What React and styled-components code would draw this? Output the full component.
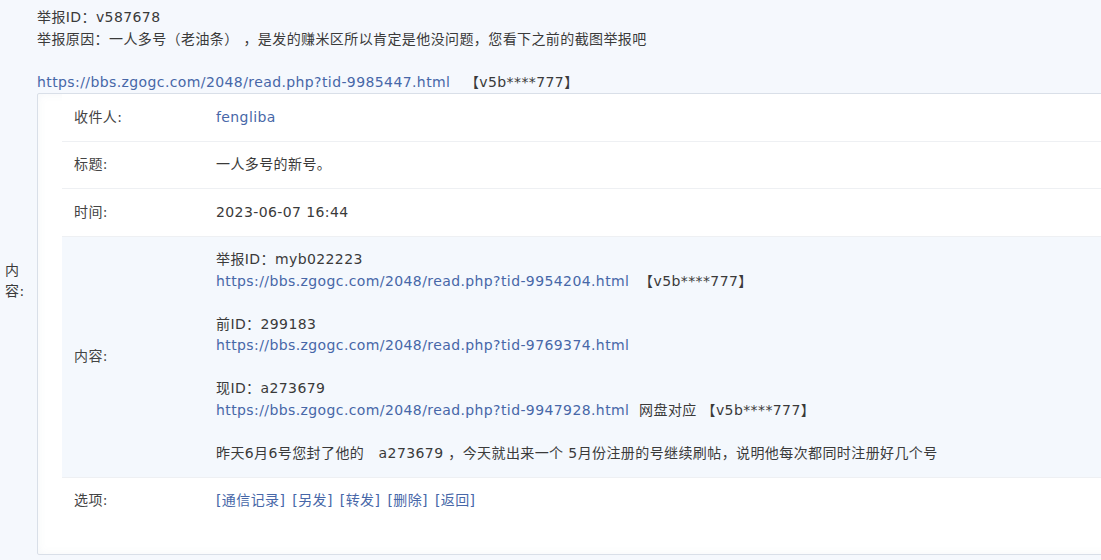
import React from "react";
import styled, { createGlobalStyle } from "styled-components";

const Global = createGlobalStyle`
  html, body {
    margin: 0;
    padding: 0;
    background: #f5f8fd;
    overflow: hidden;
  }
  body {
    font-family: "DejaVu Sans", "Noto Sans CJK SC", sans-serif;
    font-size: 14px;
    letter-spacing: 0.4px;
    line-height: 21.5px;
    color: #3a3a3a;
  }
`;

const Outer = styled.div`
  display: grid;
  grid-template-columns: 32px 1100px;
  align-items: center;
  padding-top: 7px;
  width: 1132px;
`;

const SideLabel = styled.div`
  padding: 0 4px 0 5px;
  color: #3a3a3a;
`;

const Main = styled.div`
  padding-left: 5px;
`;

const Line = styled.div`
  white-space: pre;
  margin-bottom: ${(p) => (p.$gap ? "21.5px" : "0")};
`;

const Link = styled.a`
  color: #4767a8;
  text-decoration: none;
`;

const Box = styled.div`
  background: #ffffff;
  border: 1px solid #d9dfe8;
  border-radius: 2px;
  box-shadow: inset 0 0 8px rgba(120, 140, 170, 0.08);
  padding: 0 24px 30px 24px;
`;

const Row = styled.div`
  display: grid;
  grid-template-columns: 142px 1fr;
  align-items: center;
  background: ${(p) => (p.$alt ? "#f4f8fd" : "#ffffff")};
  border-bottom: ${(p) => (p.$last ? "none" : "1px solid #eef0f3")};
`;

const Label = styled.div`
  padding: 12.5px 12px;
  color: #444;
`;

const Value = styled.div`
  padding: 12.5px 12px;
  color: #3a3a3a;
  white-space: nowrap;
`;

const Options = styled.div`
  display: flex;
  gap: 7px;
`;

export default function App() {
  return (
    <>
      <Global />
      <Outer>
        <SideLabel>内容:</SideLabel>
        <Main>
          <Line>举报ID：v587678</Line>
          <Line $gap>举报原因：一人多号（老油条） ，是发的赚米区所以肯定是他没问题，您看下之前的截图举报吧</Line>
          <Line>
            <Link href="#">https://bbs.zgogc.com/2048/read.php?tid-9985447.html</Link>{"   【v5b****777】"}
          </Line>
          <Box>
            <Row>
              <Label>收件人:</Label>
              <Value>
                <Link href="#">fengliba</Link>
              </Value>
            </Row>
            <Row>
              <Label>标题:</Label>
              <Value>一人多号的新号。</Value>
            </Row>
            <Row>
              <Label>时间:</Label>
              <Value>2023-06-07 16:44</Value>
            </Row>
            <Row $alt>
              <Label>内容:</Label>
              <Value>
                <Line>举报ID：myb022223</Line>
                <Line $gap>
                  <Link href="#">https://bbs.zgogc.com/2048/read.php?tid-9954204.html</Link>{"  【v5b****777】"}
                </Line>
                <Line>前ID：299183</Line>
                <Line $gap>
                  <Link href="#">https://bbs.zgogc.com/2048/read.php?tid-9769374.html</Link>
                </Line>
                <Line>现ID：a273679</Line>
                <Line $gap>
                  <Link href="#">https://bbs.zgogc.com/2048/read.php?tid-9947928.html</Link>{"  网盘对应 【v5b****777】"}
                </Line>
                <Line>昨天6月6号您封了他的　a273679 ，今天就出来一个 5月份注册的号继续刷帖，说明他每次都同时注册好几个号</Line>
              </Value>
            </Row>
            <Row $last>
              <Label>选项:</Label>
              <Value>
                <Options>
                  <Link href="#">[通信记录]</Link>
                  <Link href="#">[另发]</Link>
                  <Link href="#">[转发]</Link>
                  <Link href="#">[删除]</Link>
                  <Link href="#">[返回]</Link>
                </Options>
              </Value>
            </Row>
          </Box>
        </Main>
      </Outer>
    </>
  );
}
